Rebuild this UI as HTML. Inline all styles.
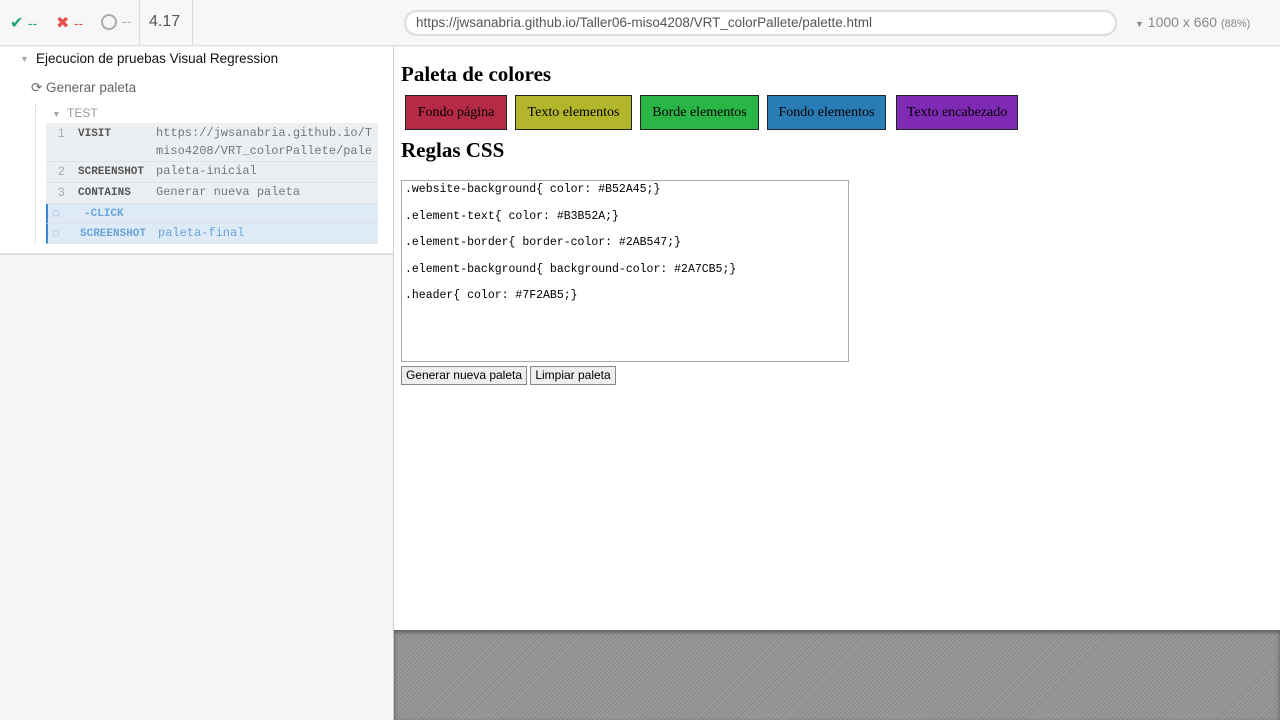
<!DOCTYPE html>
<html><head><meta charset="utf-8"><style>
*{box-sizing:border-box}
body{margin:0;width:1280px;height:720px;overflow:hidden;background:#f5f5f5;font-family:"Liberation Sans",sans-serif;position:relative}
.top{position:absolute;left:0;top:0;width:1280px;height:46px;background:#f7f7f7;border-bottom:1px solid #ddd}
.abs{position:absolute}
.mono{font-family:"Liberation Mono",monospace}
.row{position:absolute;left:46px;width:332px;background:#eceff2;border-bottom:1px solid #dfe3e7}
.num{position:absolute;left:12px;color:#aaa;font-size:12px}
.cmd{position:absolute;left:32px;font-weight:bold;font-size:11px;color:#555}
.msg{position:absolute;left:110px;font-size:12px;color:#777;line-height:18px;white-space:nowrap;overflow:hidden;width:220px}
.box{position:absolute;top:95px;height:35px;border:1px solid #222;font-family:"Liberation Serif",serif;font-size:14px;line-height:33px;text-align:center;white-space:nowrap}
</style></head><body>
<div class="top"></div>
<div class="abs" style="left:10px;top:13px;color:#1ea672;font-size:16px">✔ <span style="font-size:14px">--</span></div>
<div class="abs" style="left:56px;top:13px;color:#e94f4f;font-size:16px">✖ <span style="font-size:14px">--</span></div>
<div class="abs" style="left:101px;top:14px;width:16px;height:16px;border:2px solid #aaa;border-radius:50%"></div>
<div class="abs" style="left:122px;top:13px;color:#aaa;font-size:14px">--</div>
<div class="abs" style="left:139px;top:0;width:1px;height:46px;background:#ddd"></div>
<div class="abs" style="left:149px;top:13px;color:#555;font-size:16px">4.17</div>
<div class="abs" style="left:192px;top:0;width:1px;height:46px;background:#ddd"></div>
<div class="abs" style="left:404px;top:10px;width:713px;height:26px;border:2px solid #ddd;border-radius:13px;background:#fff;font-size:13.5px;color:#555;padding:3px 10px;white-space:nowrap">https://jwsanabria.github.io/Taller06-miso4208/VRT_colorPallete/palette.html</div>
<div class="abs" style="left:1135px;top:14px;color:#888;font-size:14px"><span style="font-size:9px">▼</span> 1000 x 660 <span style="font-size:11px">(88%)</span></div>

<div class="abs" style="left:0;top:47px;width:393px;height:208px;background:#fff;border-bottom:2px solid #ddd"></div>
<div class="abs" style="left:20px;top:54px;color:#aaa;font-size:9px">▼</div>
<div class="abs" style="left:36px;top:51px;color:#111;font-size:13.5px">Ejecucion de pruebas Visual Regression</div>
<div class="abs" style="left:31px;top:80px;color:#666;font-size:13.5px">⟳ Generar paleta</div>
<div class="abs" style="left:35px;top:104px;width:1px;height:140px;border-left:1px dotted #ccc"></div>
<div class="abs" style="left:52px;top:109px;color:#aaa;font-size:9px">▼</div>
<div class="abs" style="left:67px;top:106px;color:#999;font-size:12px">TEST</div>
<div class="row" style="top:123px;height:39px"><span class="num" style="top:3px">1</span><span class="cmd mono" style="top:5px">VISIT</span><span class="msg mono" style="top:1px;white-space:normal;height:36px">https://jwsanabria.github.io/T miso4208/VRT_colorPallete/pale</span></div>
<div class="row" style="top:162px;height:21px"><span class="num" style="top:2px">2</span><span class="cmd mono" style="top:4px">SCREENSHOT</span><span class="msg mono">paleta-inicial</span></div>
<div class="row" style="top:183px;height:21px"><span class="num" style="top:2px">3</span><span class="cmd mono" style="top:4px">CONTAINS</span><span class="msg mono">Generar nueva paleta</span></div>
<div class="row" style="top:204px;height:20px;background:#deebf7;border-left:2px solid #3a87d4"><span class="abs" style="left:4px;top:1px;color:#6aa4dd;font-size:13px">◌</span><span class="cmd mono" style="top:4px;left:36px;color:#6aa4dd">-CLICK</span></div>
<div class="row" style="top:224px;height:20px;background:#deebf7;border-left:2px solid #3a87d4"><span class="abs" style="left:4px;top:1px;color:#6aa4dd;font-size:13px">◌</span><span class="cmd mono" style="top:4px;color:#6aa4dd">SCREENSHOT</span><span class="msg mono" style="color:#6aa4dd">paleta-final</span></div>

<div class="abs" style="left:393px;top:46px;width:1px;height:674px;background:#ccc"></div>
<div class="abs" style="left:394px;top:47px;width:886px;height:584px;background:#fff"></div>
<div class="abs" style="left:394px;top:630px;width:886px;height:90px;background:repeating-linear-gradient(135deg,#9a9a9a 0 2px,#888 2px 3px);box-shadow:inset 0 2px 4px #555"></div>

<div class="abs" style="left:401px;top:62px;font-family:'Liberation Serif',serif;font-weight:bold;font-size:21px">Paleta de colores</div>
<div class="box" style="left:405px;width:102px;background:#B52A45">Fondo página</div>
<div class="box" style="left:515px;width:117px;background:#B3B52A">Texto elementos</div>
<div class="box" style="left:640px;width:119px;background:#2AB547">Borde elementos</div>
<div class="box" style="left:767px;width:119px;background:#2A7CB5">Fondo elementos</div>
<div class="box" style="left:896px;width:122px;background:#7F2AB5">Texto encabezado</div>
<div class="abs" style="left:401px;top:138px;font-family:'Liberation Serif',serif;font-weight:bold;font-size:21px">Reglas CSS</div>
<div class="abs mono" style="left:401px;top:180px;width:448px;height:182px;border:1px solid #aaa;font-size:11.5px;line-height:26.5px;padding:0 3px;overflow:hidden"><div style="position:relative;top:-4px">
.website-background{ color: #B52A45;}<br>.element-text{ color: #B3B52A;}<br>.element-border{ border-color: #2AB547;}<br>.element-background{ background-color: #2A7CB5;}<br>.header{ color: #7F2AB5;}</div></div>
<div class="abs" style="left:401px;top:366px;width:126px;height:19px;border:1px solid #888;background:#eee;font-size:12px;line-height:17px;text-align:center">Generar nueva paleta</div>
<div class="abs" style="left:530px;top:366px;width:86px;height:19px;border:1px solid #888;background:#eee;font-size:12px;line-height:17px;text-align:center">Limpiar paleta</div>
</body></html>
